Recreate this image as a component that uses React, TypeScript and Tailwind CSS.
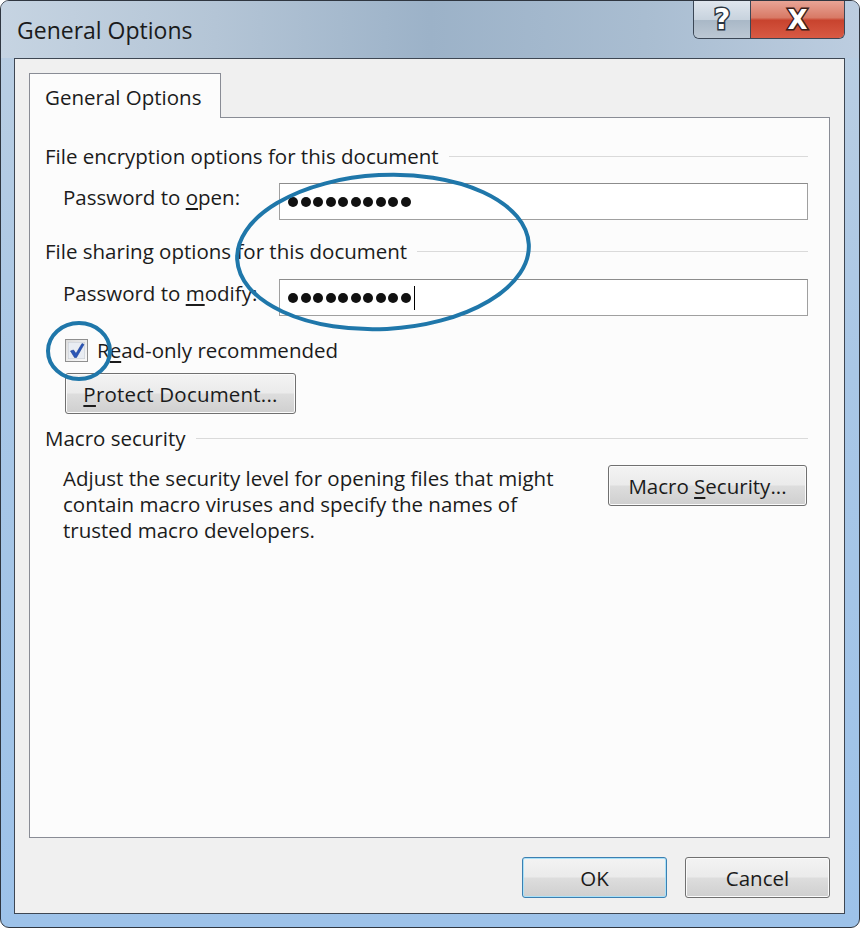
import React from 'react';

const FONT = { fontFamily: '"Open Sans", "Noto Sans", "DejaVu Sans", sans-serif' };

function Dots({ count }: { count: number }) {
  return (
    <div className="flex items-center gap-[2.5px]">
      {Array.from({ length: count }).map((_, i) => (
        <span key={i} className="block w-[10px] h-[10px] rounded-full bg-[#111]" />
      ))}
    </div>
  );
}

function SectionHeading({ children }: { children: React.ReactNode }) {
  return (
    <div className="flex items-center h-[26px] pr-[21px]">
      <span className="whitespace-nowrap">{children}</span>
      <div className="flex-1 ml-[10px] h-px bg-[#dadada]" />
    </div>
  );
}

function PasswordRow({ label, count, caret }: { label: React.ReactNode; count: number; caret?: boolean }) {
  return (
    <div className="flex items-center pr-[21px]">
      <div className="w-[234px] pl-[18px] pb-[9px] whitespace-nowrap">{label}</div>
      <div className="flex-1 h-[37px] border border-[#a0a0a0] border-t-[#8c8c8c] bg-white flex items-center pl-[8px]">
        <Dots count={count} />
        {caret && <span className="block w-px h-[24px] bg-black ml-[3px]" />}
      </div>
    </div>
  );
}

function WinButton({ children, w, focused }: { children: React.ReactNode; w: string; focused?: boolean }) {
  return (
    <div
      className={`${w} h-[41px] rounded-[3px] border flex items-center justify-center whitespace-nowrap bg-[linear-gradient(#f3f3f3_0%,#ebebeb_48%,#dddddd_52%,#cfcfcf_100%)] ${
        focused
          ? 'border-[#3c7fb1] shadow-[inset_0_0_0_1px_#a9e1f8]'
          : 'border-[#707070] shadow-[inset_0_0_0_1px_#fbfbfb]'
      }`}
    >
      {children}
    </div>
  );
}

export default function App() {
  return (
    <div
      className="relative w-[860px] h-[928px] rounded-[9px] border border-[#2f3640] bg-[linear-gradient(180deg,#bccfe2_0%,#a9c7e6_40%,#9dc2e9_100%)] flex flex-col overflow-hidden text-[#1b1b1b]"
      style={FONT}
    >
      {/* title bar */}
      <div className="h-[57px] flex items-start bg-[linear-gradient(90deg,#c6d4e2_0%,#b4c5d6_25%,#9cb2c8_50%,#a9bdd1_75%,#bccde0_100%)]">
        <div className="ml-[16px] mt-[14px] text-[23px] leading-[30px]">General Options</div>
        <div className="flex-1" />
        <div className="mr-[14px] flex h-[38px] border border-t-0 border-[#3b4756] rounded-b-[6px] overflow-hidden">
          <div className="w-[57px] flex items-center justify-center bg-[linear-gradient(#dfe6ee_0%,#c8d3de_50%,#a9b8c7_52%,#bcc8d4_100%)] border-r border-[#3b4756]">
            <span
              className="text-[28px] font-bold text-white leading-none [-webkit-text-stroke:3px_#2a3440] [paint-order:stroke_fill]"
              style={{ fontFamily: '"DejaVu Sans", sans-serif' }}
            >
              ?
            </span>
          </div>
          <div className="w-[93px] flex items-center justify-center bg-[linear-gradient(#e8a496_0%,#d87a66_45%,#c8432e_52%,#d85a44_100%)]">
            <span
              className="text-[26px] font-bold text-white leading-none [-webkit-text-stroke:3px_#3a1c18] [paint-order:stroke_fill]"
              style={{ fontFamily: '"DejaVu Sans", sans-serif' }}
            >
              X
            </span>
          </div>
        </div>
      </div>

      {/* client area */}
      <div className="ml-[13px] mr-[14px] mb-[13px] flex-1 border border-[#3e4753] bg-[#f0f0f0] flex flex-col pt-[14px] px-[14px] text-[20.5px] leading-[26px]">
        {/* tab */}
        <div className="w-[192px] h-[45px] border border-b-0 border-[#898c95] bg-[#fcfcfc] -mb-px relative z-10 pl-[15px] flex items-center pt-[2px]">
          <span className="whitespace-nowrap">General Options</span>
        </div>
        {/* panel */}
        <div className="h-[721px] border border-[#898c95] bg-[#fcfcfc] pl-[15px] pt-[25px]">
          <SectionHeading>File encryption options for this document</SectionHeading>
          <div className="mt-[14px]">
            <PasswordRow label={<>Password to <u className="underline-offset-[3px]">o</u>pen:</>} count={10} />
          </div>
          <div className="mt-[18px]">
            <SectionHeading>File sharing options for this document</SectionHeading>
          </div>
          <div className="mt-[15px]">
            <PasswordRow label={<>Password to <u className="underline-offset-[3px]">m</u>odify:</>} count={10} caret />
          </div>
          <div className="mt-[21px] h-[26px] flex items-center pl-[20px]">
            <div className="w-[23px] h-[23px] border border-[#8f8f8f] bg-[linear-gradient(135deg,#dcdcdc,#fafafa)] p-[2px]">
              <svg viewBox="0 0 17 17" className="w-full h-full">
                <rect x="0" y="0" width="17" height="17" fill="#e9edf3" stroke="#c4c8ce" strokeWidth="1" />
                <path d="M2.5 9 L5.5 8 L8 11.5 L14 1.5 L16 2.5 L8.5 15.5 L6.5 15.5 Z" fill="#2b56b8" stroke="#1d3f92" strokeWidth="0.6" strokeLinejoin="round" />
              </svg>
            </div>
            <span className="ml-[9px] whitespace-nowrap">R<u className="underline-offset-[3px]">e</u>ad-only recommended</span>
          </div>
          <div className="mt-[10px] ml-[20px]">
            <WinButton w="w-[231px]"><span className="tracking-[0.2px]"><u className="underline-offset-[3px]">P</u>rotect Document...</span></WinButton>
          </div>
          <div className="mt-[11px]">
            <SectionHeading>Macro security</SectionHeading>
          </div>
          <div className="mt-[14px] flex items-start pr-[22px]">
            <div className="pl-[18px] leading-[26px] flex-1">
              Adjust the security level for opening files that might
              <br />
              contain macro viruses and specify the names of
              <br />
              trusted macro developers.
            </div>
            <WinButton w="w-[199px]"><span>Macro <u className="underline-offset-[3px]">S</u>ecurity...</span></WinButton>
          </div>
        </div>
        {/* dialog buttons */}
        <div className="mt-[19px] flex justify-end gap-[18px]">
          <WinButton w="w-[145px]" focused>OK</WinButton>
          <WinButton w="w-[145px]">Cancel</WinButton>
        </div>
      </div>

      {/* annotation ellipses */}
      <svg className="absolute left-0 top-0 pointer-events-none" width="860" height="928">
        <ellipse cx="382" cy="251" rx="146" ry="77" fill="none" stroke="#1f77aa" strokeWidth="4" transform="rotate(-3 382 251)" />
        <ellipse cx="78" cy="350" rx="31" ry="28" fill="none" stroke="#1f77aa" strokeWidth="4" />
      </svg>
    </div>
  );
}
